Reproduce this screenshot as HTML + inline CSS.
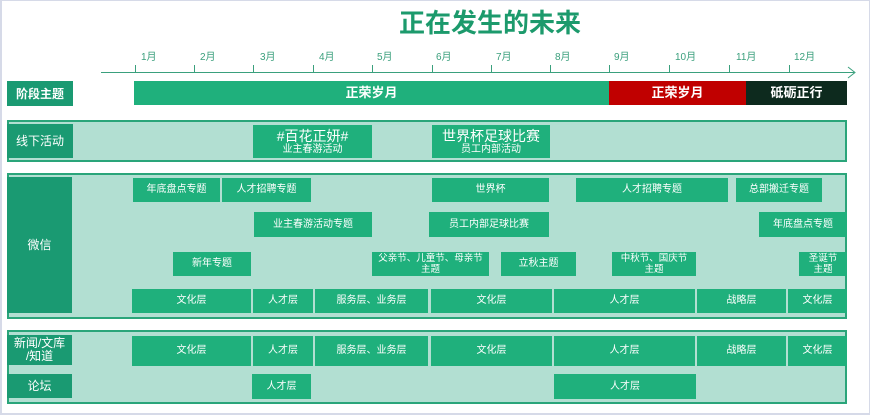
<!DOCTYPE html>
<html><head><meta charset="utf-8"><style>
*{margin:0;padding:0;box-sizing:border-box}
body{width:870px;height:415px;background:#fff;position:relative;overflow:hidden;font-family:"Liberation Sans","Noto Sans CJK SC",sans-serif}
.frame{position:absolute;left:0;top:0;width:870px;height:415px;border:2px solid #d6dae8;border-top:1px solid #d6dae8;border-right:1px solid #d6dae8}
.a{position:absolute;display:flex;align-items:center;justify-content:center;text-align:center;color:#fff;font-size:10px;line-height:12px}
.two{line-height:11px;font-size:9.5px}
.g{background:#1fb07c}
.d{background:#1a9a72;font-size:12px}
.o{position:absolute;background:#b2dfd2;border:2px solid #2aa57a}
.m{position:absolute;top:48px;font-size:10px;color:#3a9f7c}
.t{position:absolute;top:65px;width:1px;height:8px;background:#3aa07d}
</style></head><body>
<div class="frame"></div>
<div style="position:absolute;left:0;width:870px;top:6px;text-align:center;padding-left:110px;font-size:26px;font-weight:bold;color:#1c9a6c;line-height:34px">正在发生的未来</div>
<div class="m" style="left:141px">1月</div><div class="m" style="left:200px">2月</div><div class="m" style="left:260px">3月</div><div class="m" style="left:319px">4月</div><div class="m" style="left:377px">5月</div><div class="m" style="left:436px">6月</div><div class="m" style="left:496px">7月</div><div class="m" style="left:555px">8月</div><div class="m" style="left:614px">9月</div><div class="m" style="left:675px">10月</div><div class="m" style="left:736px">11月</div><div class="m" style="left:794px">12月</div>
<div style="position:absolute;left:101px;top:72px;width:753px;height:1px;background:#3aa07d"></div>
<svg style="position:absolute;left:846px;top:66px" width="12" height="13"><path d="M2 1 L9 6.5 L2 12" fill="none" stroke="#3aa07d" stroke-width="1"/></svg>
<div class="t" style="left:135px"></div><div class="t" style="left:194px"></div><div class="t" style="left:253px"></div><div class="t" style="left:313px"></div><div class="t" style="left:372px"></div><div class="t" style="left:432px"></div><div class="t" style="left:491px"></div><div class="t" style="left:550px"></div><div class="t" style="left:609px"></div><div class="t" style="left:669px"></div><div class="t" style="left:729px"></div><div class="t" style="left:789px"></div>

<div class="a d" style="left:7px;top:81px;width:66px;height:25px;font-weight:bold">阶段主题</div>
<div class="a g" style="left:134px;top:81px;width:475px;height:24px;font-size:13px;font-weight:bold">正荣岁月</div>
<div class="a" style="left:609px;top:81px;width:137px;height:24px;background:#c00000;font-size:13px;font-weight:bold">正荣岁月</div>
<div class="a" style="left:746px;top:81px;width:101px;height:24px;background:#0d2a1e;font-size:13px;font-weight:bold">砥砺正行</div>

<div class="o" style="left:7px;top:120px;width:840px;height:42px"></div>
<div class="a d" style="left:7px;top:124px;width:66px;height:34px">线下活动</div>
<div class="a g" style="left:253px;top:125px;width:119px;height:33px;flex-direction:column"><span style="font-size:14px;line-height:16px">#百花正妍#</span><span>业主春游活动</span></div>
<div class="a g" style="left:432px;top:125px;width:118px;height:33px;flex-direction:column"><span style="font-size:14px;line-height:16px">世界杯足球比赛</span><span>员工内部活动</span></div>

<div class="o" style="left:7px;top:173px;width:840px;height:146px"></div>
<div class="a d" style="left:7px;top:177px;width:65px;height:136px">微信</div>
<div class="a g" style="left:133px;top:178px;width:87px;height:24px">年底盘点专题</div>
<div class="a g" style="left:222px;top:178px;width:89px;height:24px">人才招聘专题</div>
<div class="a g" style="left:432px;top:178px;width:117px;height:24px">世界杯</div>
<div class="a g" style="left:576px;top:178px;width:152px;height:24px">人才招聘专题</div>
<div class="a g" style="left:736px;top:178px;width:86px;height:24px">总部搬迁专题</div>
<div class="a g" style="left:254px;top:212px;width:118px;height:25px">业主春游活动专题</div>
<div class="a g" style="left:429px;top:212px;width:120px;height:25px">员工内部足球比赛</div>
<div class="a g" style="left:759px;top:212px;width:88px;height:25px">年底盘点专题</div>
<div class="a g" style="left:173px;top:252px;width:78px;height:24px">新年专题</div>
<div class="a g two" style="left:372px;top:252px;width:117px;height:24px">父亲节、儿童节、母亲节<br>主题</div>
<div class="a g" style="left:501px;top:252px;width:75px;height:24px">立秋主题</div>
<div class="a g two" style="left:612px;top:252px;width:84px;height:24px">中秋节、国庆节<br>主题</div>
<div class="a g two" style="left:799px;top:252px;width:48px;height:24px">圣诞节<br>主题</div>
<div class="a g" style="left:132px;top:289px;width:119px;height:24px">文化层</div>
<div class="a g" style="left:253px;top:289px;width:60px;height:24px">人才层</div>
<div class="a g" style="left:315px;top:289px;width:113px;height:24px">服务层、业务层</div>
<div class="a g" style="left:431px;top:289px;width:121px;height:24px">文化层</div>
<div class="a g" style="left:554px;top:289px;width:141px;height:24px">人才层</div>
<div class="a g" style="left:697px;top:289px;width:89px;height:24px">战略层</div>
<div class="a g" style="left:788px;top:289px;width:59px;height:24px">文化层</div>

<div class="o" style="left:7px;top:330px;width:840px;height:74px"></div>
<div class="a d" style="left:7px;top:335px;width:65px;height:30px;line-height:13px">新闻/文库<br>/知道</div>
<div class="a g" style="left:132px;top:336px;width:119px;height:30px">文化层</div>
<div class="a g" style="left:253px;top:336px;width:60px;height:30px">人才层</div>
<div class="a g" style="left:315px;top:336px;width:113px;height:30px">服务层、业务层</div>
<div class="a g" style="left:431px;top:336px;width:121px;height:30px">文化层</div>
<div class="a g" style="left:554px;top:336px;width:141px;height:30px">人才层</div>
<div class="a g" style="left:697px;top:336px;width:89px;height:30px">战略层</div>
<div class="a g" style="left:788px;top:336px;width:59px;height:30px">文化层</div>
<div class="a d" style="left:7px;top:374px;width:65px;height:24px">论坛</div>
<div class="a g" style="left:252px;top:374px;width:59px;height:25px">人才层</div>
<div class="a g" style="left:554px;top:374px;width:142px;height:25px">人才层</div>
</body></html>
